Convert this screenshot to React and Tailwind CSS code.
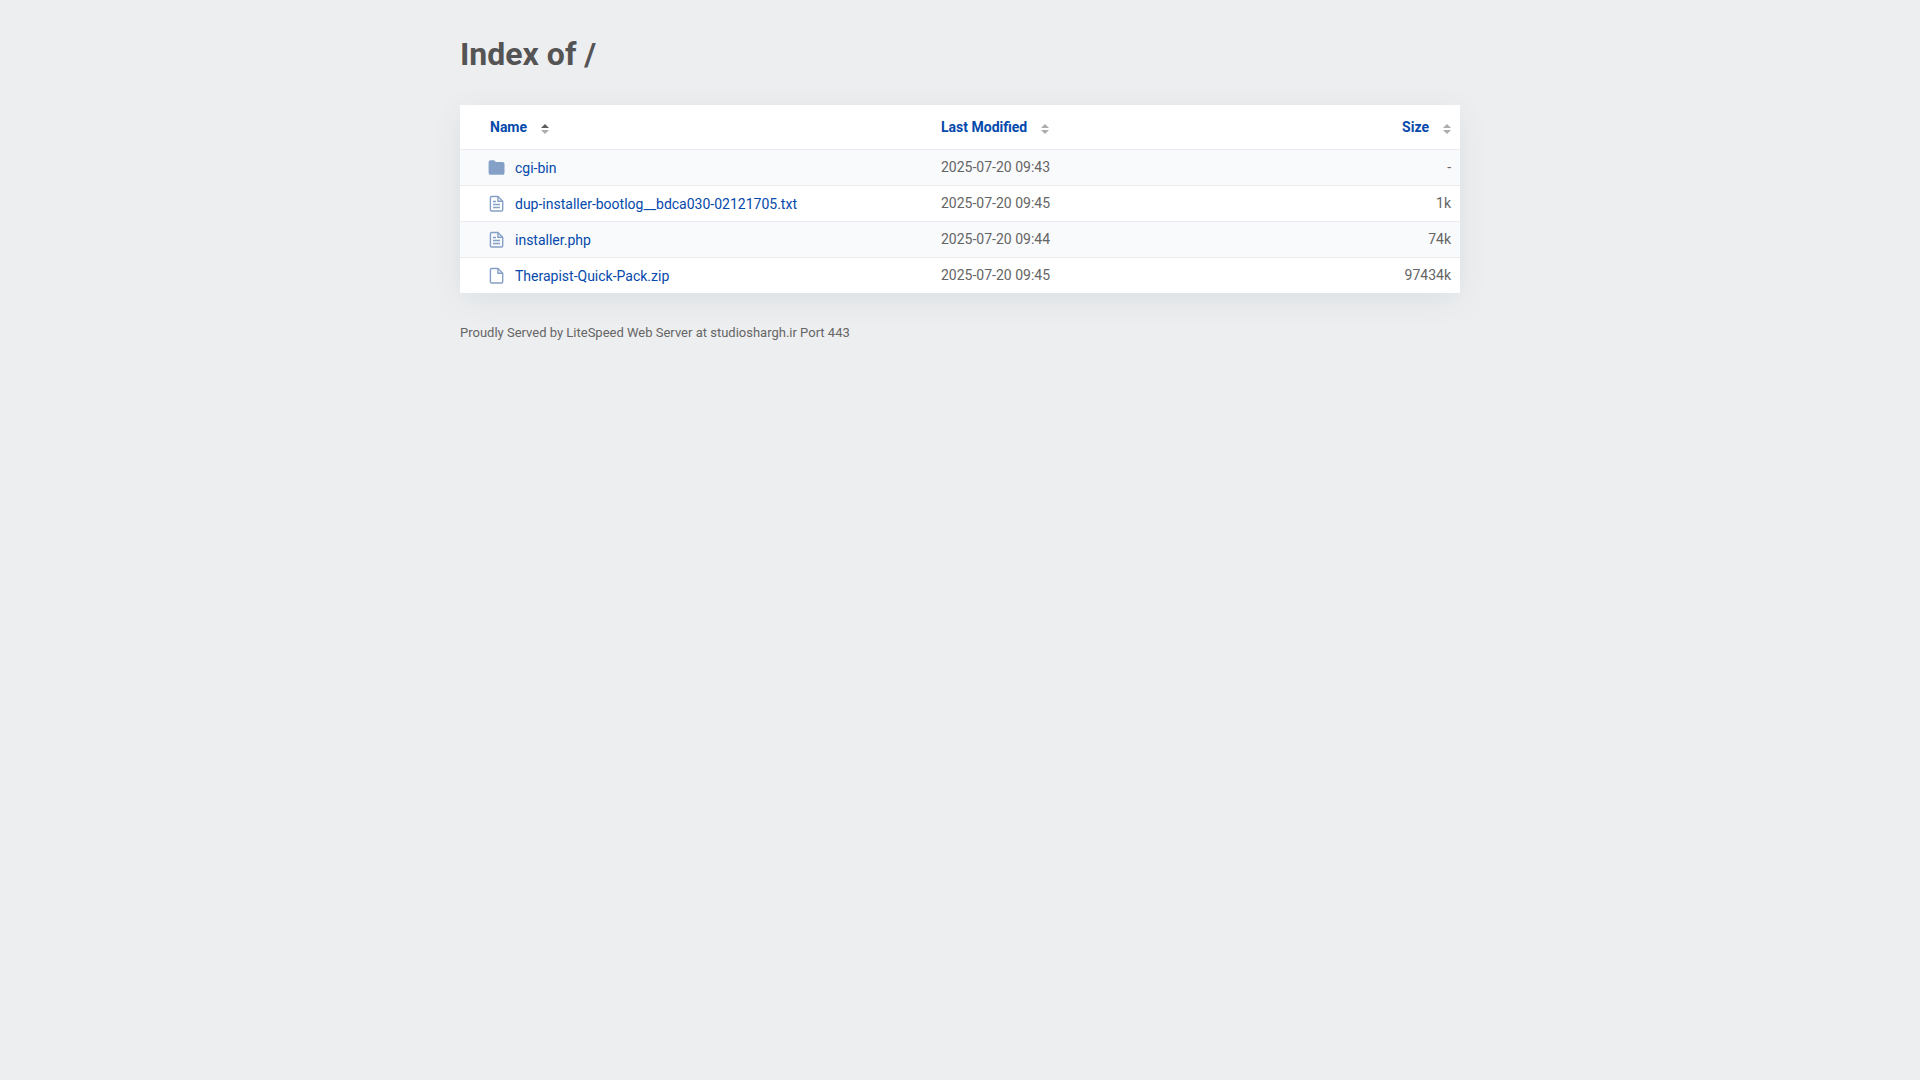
import React from "react";

const files = [
    { name: "cgi-bin", modified: "2025-07-20 09:43", size: "-", type: "folder" },
    { name: "dup-installer-bootlog__bdca030-02121705.txt", modified: "2025-07-20 09:45", size: "1k", type: "text" },
    { name: "installer.php", modified: "2025-07-20 09:44", size: "74k", type: "text" },
    { name: "Therapist-Quick-Pack.zip", modified: "2025-07-20 09:45", size: "97434k", type: "file" },
];

function FileIcon({ type }) {
    if (type === "folder") {
        return (
            <svg className="w-5 h-5 shrink-0" viewBox="0 0 20 20" fill="#85a0c7" aria-hidden="true">
                <path d="M1.6 4.2a1.9 1.9 0 0 1 1.9-1.9h3.3c.6 0 .9.2 1.2.6l.7 1.1h6.9a1.9 1.9 0 0 1 1.9 1.9v9a1.9 1.9 0 0 1-1.9 1.9H3.5a1.9 1.9 0 0 1-1.9-1.9z" />
            </svg>
        );
    }

    return (
        <svg className="w-5 h-5 shrink-0" viewBox="0 0 20 20" fill="none" stroke="#85a0c7" strokeWidth="1.4" aria-hidden="true">
            <path d="M4.6 2.5h6.3l4.8 4.8v8.5a1.2 1.2 0 0 1-1.2 1.2H4.6a1.2 1.2 0 0 1-1.2-1.2V3.7a1.2 1.2 0 0 1 1.2-1.2z" />
            <path d="M10.9 2.5v4.8h4.8" />
            {type === "text" && <path d="M6 7.5h3M6 10.5h7M6 13.5h7" />}
        </svg>
    );
}

function SortHeader({ label, sorted }) {
    return (
        <button type="button" className="inline-flex items-center gap-[14px] font-bold text-[#0449ab] align-top">
            {label}
            <svg className="w-2 h-[10px] mt-1" viewBox="0 0 8 10" aria-hidden="true">
                <path d="M0 4 4 0l4 4z" fill={sorted ? "#5c5c5c" : "#adadad"} />
                <path d="M0 6h8l-4 4z" fill="#adadad" />
            </svg>
        </button>
    );
}

export default function App() {
    return (
        <div className="min-h-screen bg-[#edeef0] px-5 py-8 font-['Roboto',sans-serif] text-sm text-[#656565]">
            <div className="mx-auto w-full max-w-[1000px]">
                <h1 className="text-[32px] leading-[44px] font-bold text-[#545454]">Index of /</h1>

                <table className="mt-[29px] w-full table-fixed border-collapse bg-white shadow-[0_7px_30px_-2px_rgba(0,80,80,0.09)]">
                    <thead>
                        <tr className="h-[44px]">
                            <th className="w-[472px] pl-[30px] text-left leading-4" aria-sort="ascending">
                                <SortHeader label="Name" sorted />
                            </th>
                            <th className="px-[9px] text-left leading-4">
                                <SortHeader label="Last Modified" />
                            </th>
                            <th className="w-[180px] px-[9px] text-right leading-4">
                                <SortHeader label="Size" />
                            </th>
                        </tr>
                    </thead>
                    <tbody>
                        {files.map((file) => (
                            <tr key={file.name} className="h-9 border-t border-[#e9ebee] odd:bg-[#f9fafc]">
                                <td className="pt-[2px] pl-[27px]">
                                    <a href={`/${file.name}`} className="flex items-center gap-2 leading-5 text-[#0449ab]">
                                        <FileIcon type={file.type} />
                                        {file.name}
                                    </a>
                                </td>
                                <td className="px-[9px] leading-5">{file.modified}</td>
                                <td className="px-[9px] text-right leading-5">{file.size}</td>
                            </tr>
                        ))}
                    </tbody>
                </table>

                <footer className="mt-[30px] text-[13px] leading-5">
                    Proudly Served by LiteSpeed Web Server at studioshargh.ir Port 443
                </footer>
            </div>
        </div>
    );
}
